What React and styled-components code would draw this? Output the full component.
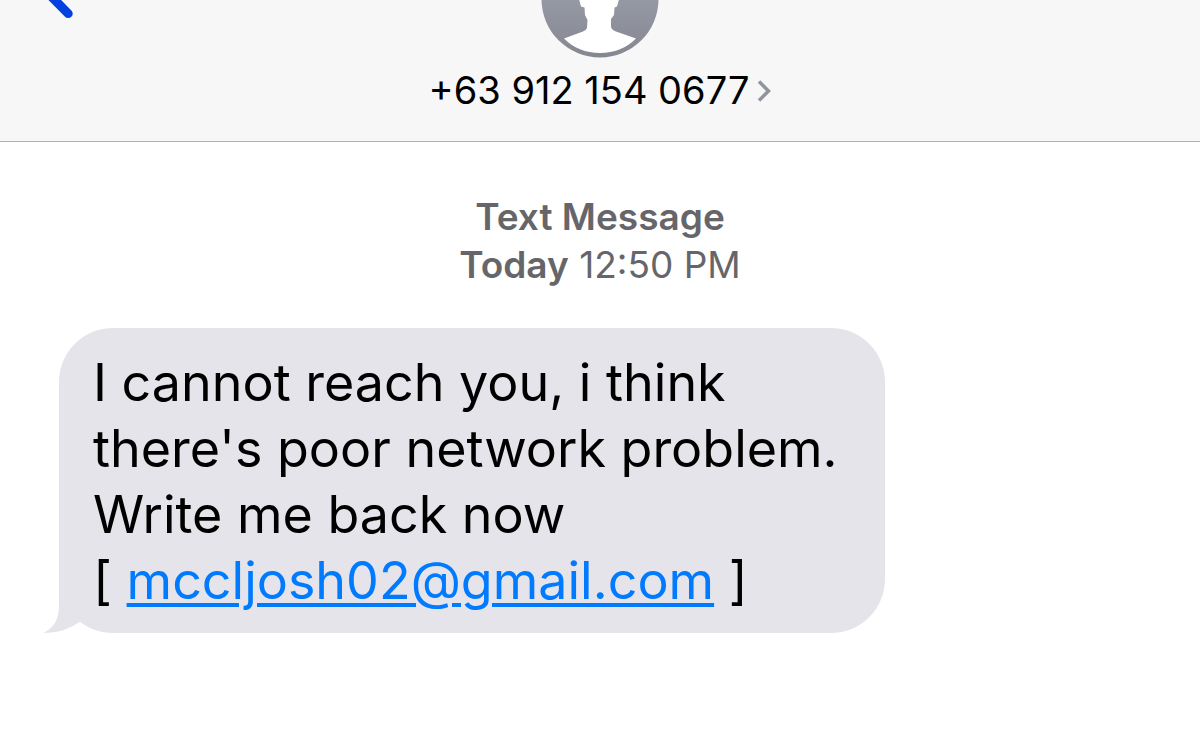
import styled, { createGlobalStyle } from "styled-components";

const GlobalStyle = createGlobalStyle`
  * {
    box-sizing: border-box;
  }
  body {
    margin: 0;
    background: #ffffff;
    color: #000000;
    font-family: Inter, "Liberation Sans", sans-serif;
  }
`;

const BackIcon = () => (
  <svg width="40" height="20" viewBox="0 0 40 20" aria-hidden="true">
    <path
      d="M-6 -21 L28.2 13.6"
      fill="none"
      stroke="#0340dd"
      strokeWidth="9"
      strokeLinecap="round"
    />
  </svg>
);

const AvatarIcon = () => (
  <svg width="118" height="58" viewBox="0 60 118 58" aria-hidden="true">
    <defs>
      <linearGradient id="avatarFill" x1="0" y1="0" x2="0" y2="1">
        <stop offset="0" stopColor="#a5abb9" />
        <stop offset="1" stopColor="#858790" />
      </linearGradient>
    </defs>
    <circle cx="59" cy="59" r="58.5" fill="url(#avatarFill)" />
    <path
      d="M37 56 L38.500 61 L40 66.500 L43.500 67.500 L44 75 L46.500 80 L46 88 Q45 90.500 42 91.500 L23 98.500 C32 108 45 113 59 113 C73 113 86 108 95 98.500 L75 91.500 Q71 90 70 87 L70 79 L73 75 L73.500 67.500 L76 66.500 L79 56 Z"
      fill="#ffffff"
    />
  </svg>
);

const ChevronIcon = () => (
  <svg width="14" height="22" viewBox="0 0 14 22" aria-hidden="true">
    <path
      d="M2 1.500 L11.500 11 L2 20.500"
      fill="none"
      stroke="#8e959d"
      strokeWidth="3.500"
    />
  </svg>
);

const App = () => {
  return (
    <>
      <GlobalStyle />
      <Header>
        <BackButton type="button" aria-label="Back">
          <BackIcon />
        </BackButton>
        <ContactButton type="button">
          <AvatarIcon />
          <ContactRow>
            <span>+63 912 154 0677</span>
            <ChevronIcon />
          </ContactRow>
        </ContactButton>
      </Header>
      <Conversation>
        <Timestamp>
          <strong>Text Message</strong>
          <span>
            <strong>Today</strong> 12:50 PM
          </span>
        </Timestamp>
        <Bubble>
          <p>
            I cannot reach you, i think there's poor network problem. Write me
            back now
          </p>
          <p>
            [ <a href="mailto:mccljosh02@gmail.com">mccljosh02@gmail.com</a> ]
          </p>
          <Tail viewBox="0 0 44 60" aria-hidden="true">
            <path
              d="M16 0 V32 C16 46 11 55 0 60 C13 60 24 57 35 50 L44 44 V0 Z"
              fill="#e5e4ea"
            />
          </Tail>
        </Bubble>
      </Conversation>
    </>
  );
};

const Header = styled.header`
  display: grid;
  grid-template-columns: 1fr auto 1fr;
  align-items: start;
  padding-bottom: 28px;
  background: #f7f7f7;
  border-bottom: 1px solid #b2b2b2;
`;

const PlainButton = styled.button`
  display: flex;
  padding: 0;
  border: none;
  background: none;
  color: inherit;
  font-family: inherit;
  cursor: pointer;
`;

const BackButton = styled(PlainButton)`
  justify-self: start;
  margin-left: 40px;
`;

const ContactButton = styled(PlainButton)`
  flex-direction: column;
  align-items: center;
  gap: 10px;
`;

const ContactRow = styled.span`
  display: flex;
  align-items: center;
  gap: 8px;
  font-size: 38px;
  line-height: 45px;
  white-space: nowrap;
`;

const Conversation = styled.main`
  display: flex;
  flex-direction: column;
  padding: 51px 59px;
`;

const Timestamp = styled.div`
  display: flex;
  flex-direction: column;
  align-items: center;
  margin-bottom: 39px;
  color: #66666a;
  font-size: 37px;
  line-height: 48px;

  strong {
    font-weight: 600;
  }
`;

const Bubble = styled.div`
  position: relative;
  align-self: flex-start;
  max-width: 826px;
  padding: 22px 38px 19px 34px;
  border-radius: 54px;
  background: #e5e4ea;
  font-size: 52px;
  line-height: 66px;

  p {
    margin: 0;
  }
  a {
    color: #007aff;
    text-decoration-thickness: 4px;
    text-underline-offset: 4px;
  }
`;

const Tail = styled.svg`
  position: absolute;
  left: -16px;
  bottom: 0;
  width: 44px;
  height: 60px;
`;

export default App;
